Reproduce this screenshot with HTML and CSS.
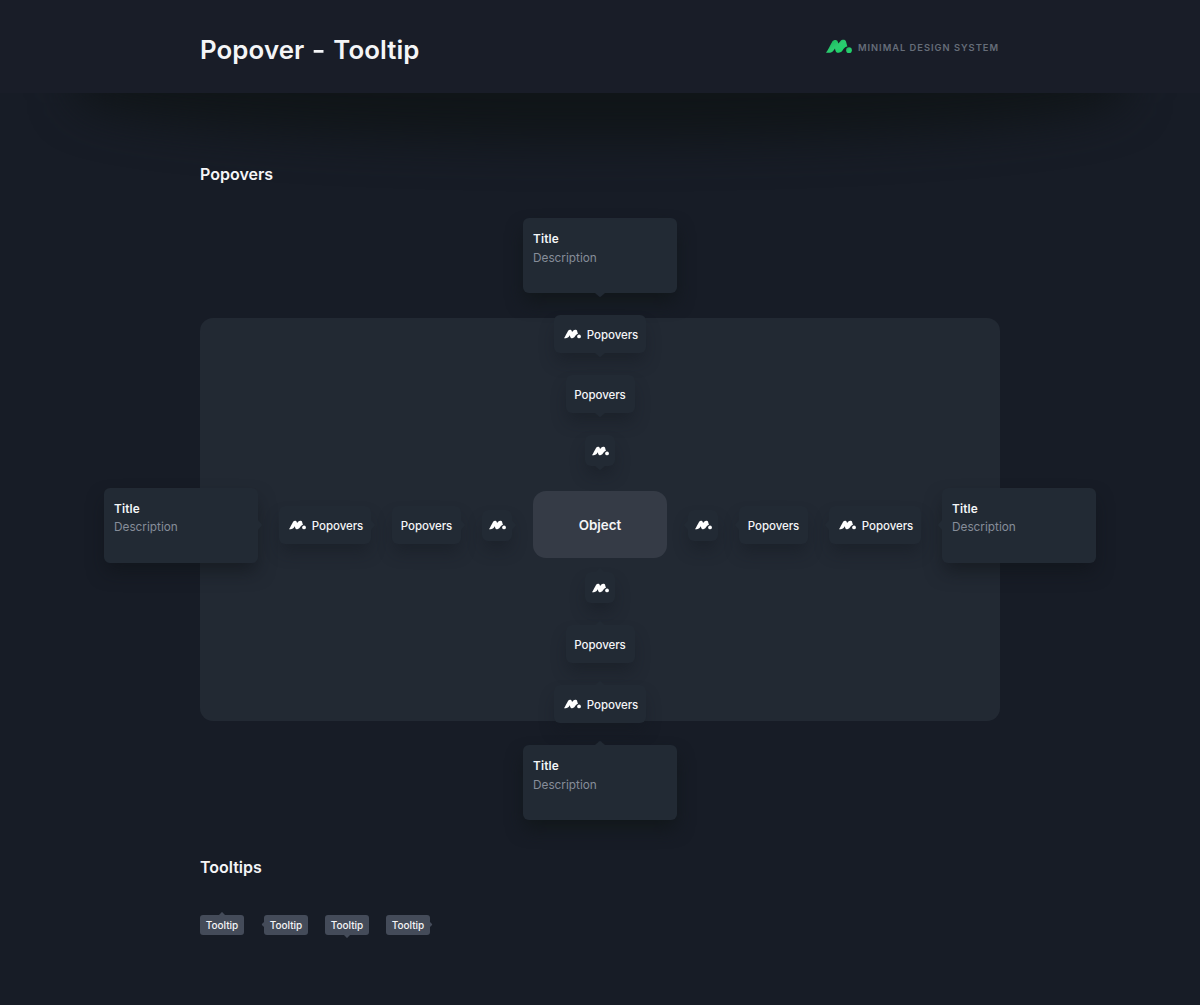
FILE: index.html
```html
<!DOCTYPE html>
<html lang="en">
<head>
<meta charset="utf-8">
<title>Popover – Tooltip</title>
<link rel="stylesheet" href="styles.css">
</head>
<body>
<svg class="defs" width="0" height="0" aria-hidden="true">
  <defs>
    <linearGradient id="brand" x1="0" y1="0" x2="1" y2="1"><stop offset="0" stop-color="#12b455"/><stop offset=".5" stop-color="#2ccb70"/><stop offset="1" stop-color="#14d863"/></linearGradient>
    <symbol id="mark" viewBox="0 0 78 42">
      <path d="M0 40C7 31 12 17 19 6C23 0 33 0 35 6L37 12L43 5C47 0 58-1 60 6L64 21C59 21 56 24 53 28C50 33 46 40 38 40C32 40 29 37 28 32L27 27L21 35C17 39 13 40 9 40Z"/>
      <circle cx="69" cy="32" r="8.5"/>
    </symbol>
  </defs>
</svg>
<header class="header">
  <div class="header-inner">
    <h1 class="page-title">Popover <span class="dash">–</span> Tooltip</h1>
    <div class="brand"><svg class="brand-mark"><use href="#mark"/></svg><span>MINIMAL DESIGN SYSTEM</span></div>
  </div>
</header>
<main>
  <h2 class="section-title">Popovers</h2>
  <section class="stage">
    <div class="panel"></div>
    <div class="column">
      <div class="card arrow-down"><b>Title</b><span>Description</span></div>
      <div class="pop wide arrow-down"><svg class="mark"><use href="#mark"/></svg><span>Popovers</span></div>
      <div class="pop arrow-down"><span>Popovers</span></div>
      <div class="pop small arrow-down"><svg class="mark"><use href="#mark"/></svg></div>
      <div class="object">Object</div>
      <div class="pop small arrow-up"><svg class="mark"><use href="#mark"/></svg></div>
      <div class="pop arrow-up"><span>Popovers</span></div>
      <div class="pop wide arrow-up"><svg class="mark"><use href="#mark"/></svg><span>Popovers</span></div>
      <div class="card arrow-up"><b>Title</b><span>Description</span></div>
    </div>
    <div class="row">
      <div class="side">
        <div class="card arrow-right"><b>Title</b><span>Description</span></div>
        <div class="pop wide arrow-right"><svg class="mark"><use href="#mark"/></svg><span>Popovers</span></div>
        <div class="pop arrow-right"><span>Popovers</span></div>
        <div class="pop small arrow-right"><svg class="mark"><use href="#mark"/></svg></div>
      </div>
      <div class="side">
        <div class="pop small arrow-left"><svg class="mark"><use href="#mark"/></svg></div>
        <div class="pop arrow-left"><span>Popovers</span></div>
        <div class="pop wide arrow-left"><svg class="mark"><use href="#mark"/></svg><span>Popovers</span></div>
        <div class="card arrow-left"><b>Title</b><span>Description</span></div>
      </div>
    </div>
  </section>
  <h2 class="section-title tooltips-title">Tooltips</h2>
  <section class="tooltips">
    <span class="tooltip arrow-up">Tooltip</span>
    <span class="tooltip arrow-left">Tooltip</span>
    <span class="tooltip arrow-down">Tooltip</span>
    <span class="tooltip arrow-right">Tooltip</span>
  </section>
</main>
</body>
</html>
```
FILE: styles.css
```css
* { box-sizing: border-box; }
body {
  margin: 0;
  height: 1005px;
  overflow: hidden;
  background: #171c26;
  color: #f4f5f7;
  font-family: Inter, "Liberation Sans", sans-serif;
  font-weight: 500;
}
.defs { display: block; height: 0; }
.header {
  position: relative;
  height: 93px;
  background: #191d28;
}
/* Soft shadow below the header, narrower than the page */
.header::after {
  content: "";
  position: absolute;
  z-index: -1;
  top: 0;
  left: 75px;
  right: 75px;
  height: 140px;
  border-radius: 0 0 50% 50% / 0 0 45px 45px;
  background: #101518;
  filter: blur(22px);
}
.header::before {
  content: "";
  position: absolute;
  z-index: -1;
  inset: 0;
  background: #191d28;
}
.header-inner {
  width: 800px;
  height: 100%;
  margin: 0 auto;
  display: flex;
  justify-content: space-between;
}
.page-title {
  margin: 33px 0 0;
  font-size: 25.8px;
  line-height: 34px;
  font-weight: 600;
  letter-spacing: .1px;
  word-spacing: 1.4px;
}
.dash { display: inline-block; transform: scaleX(.75); }
.brand {
  display: flex;
  gap: 6px;
  margin: 39px 1px 0 0;
  height: 18px;
  line-height: 18px;
  font-size: 9.3px;
  font-weight: 600;
  letter-spacing: 1px;
  color: #666d79;
}
.brand-mark { width: 26px; height: 15px; fill: url(#brand); }
.section-title {
  width: 800px;
  height: 24px;
  margin: 69px auto 0;
  font-size: 16px;
  line-height: 24px;
  font-weight: 600;
}
.stage {
  display: grid;
  grid-template-columns: 1fr;
  width: 992px;
  margin: 32px auto 0;
}
.stage > * { grid-area: 1 / 1; }
.panel {
  margin: 100px 96px 99px;
  border-radius: 13px;
  background: #222933;
}
.column {
  display: flex;
  flex-direction: column;
  align-items: center;
  gap: 22px;
}
.row {
  display: flex;
  align-items: center;
  justify-content: space-between;
  margin-top: 12px;
}
.side { display: flex; align-items: center; gap: 21px; }
.card, .pop {
  position: relative;
  background: #222a34;
  box-shadow: 0 10px 16px -2px rgba(20, 24, 32, .42);
}
.card {
  display: flex;
  flex-direction: column;
  width: 154px;
  height: 75px;
  padding: 12px 10px;
  border-radius: 6px;
  font-size: 11.8px;
  line-height: 18.5px;
  box-shadow: 0 10px 18px -2px #11171a;
}
.side .card { box-shadow: 0 10px 18px -2px rgba(15, 19, 22, .55); }
.card b { font-weight: 600; letter-spacing: .15px; }
.card span { color: #868d99; font-weight: 400; }
.pop {
  display: flex;
  align-items: center;
  justify-content: center;
  gap: 6px;
  width: 69px;
  height: 38px;
  border-radius: 6px;
  font-size: 11.5px;
  letter-spacing: -.05px;
}
.pop span { padding-top: 1px; }
.pop.wide { width: 92px; padding-left: 2px; }
.pop.small { width: 30px; height: 31px; }
.mark { width: 17px; height: 10px; fill: #fff; flex: none; }
.object {
  display: grid;
  place-items: center;
  width: 134px;
  height: 67px;
  margin: 3px 0 -8px;
  border-radius: 13px;
  background: #353b46;
  font-size: 13.4px;
  font-weight: 600;
}
/* Pointer triangles */
.card::after, .pop::after, .tooltip::after {
  content: "";
  position: absolute;
  width: 10px;
  height: 4px;
  background: inherit;
  clip-path: polygon(0 0, 100% 0, 60% 85%, 50% 100%, 40% 85%);
}
.arrow-down::after { top: 100%; left: calc(50% - 5px); }
.arrow-up::after { bottom: 100%; left: calc(50% - 5px); transform: rotate(180deg); }
.arrow-left::after { left: -7px; top: calc(50% - 2px); transform: rotate(90deg); }
.arrow-right::after { right: -7px; top: calc(50% - 2px); transform: rotate(-90deg); }
.tooltips-title { margin-top: 35px; }
.tooltips {
  display: flex;
  gap: 17px;
  width: 800px;
  margin: 36px auto 0;
}
.tooltip {
  position: relative;
  width: 44px;
  height: 20px;
  border-radius: 3px;
  background: #444b59;
  text-align: center;
  font-size: 10px;
  line-height: 21px;
}
.tooltip.arrow-left { margin-left: 3px; }
.tooltip::after { width: 6px; height: 3px; }
.tooltip.arrow-down::after, .tooltip.arrow-up::after { left: calc(50% - 3px); }
.tooltip.arrow-left::after { left: -4px; }
.tooltip.arrow-right::after { right: -4px; }
```
